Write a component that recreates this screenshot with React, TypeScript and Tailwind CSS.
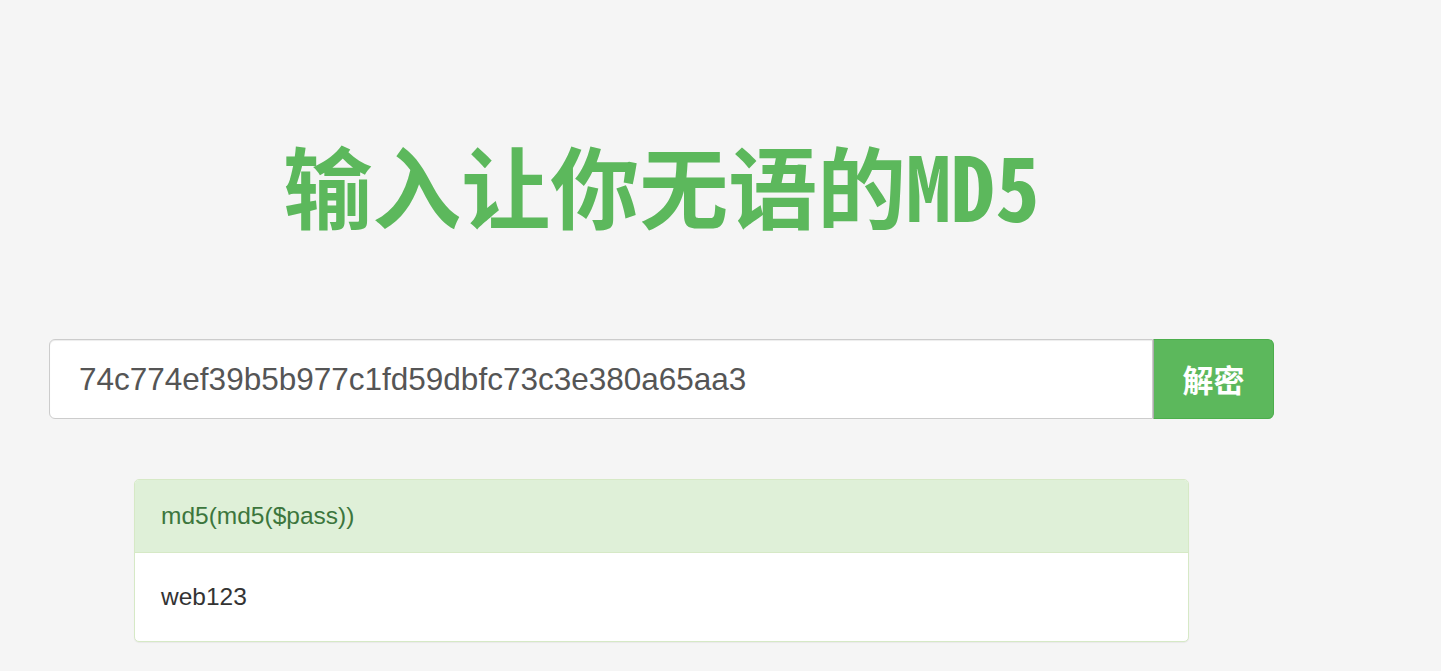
export default function App() {
  return (
    <div className="min-h-screen bg-[#f5f5f5] font-['Liberation_Sans','Noto_Sans_CJK_SC',sans-serif]">
      <div className="ml-[49px] w-[1225px] pt-[133px]">
        {/* Title */}
        <h1 className="flex h-[100px] items-center justify-center font-['Noto_Sans_Mono_CJK_SC','Noto_Sans_CJK_SC',sans-serif] text-[89px] font-bold leading-none text-[#5cb85c]">
          输入让你无语的MD5
        </h1>

        {/* Search bar */}
        <div className="mt-[106px] flex h-[80px]">
          <input
            className="h-full flex-1 rounded-l-[6px] border border-[#ccc] bg-white pl-[29px] text-[31.5px] text-[#555] shadow-[inset_0_1px_1px_rgba(0,0,0,0.075)] outline-none"
            defaultValue="74c774ef39b5b977c1fd59dbfc73c3e380a65aa3"
          />
          <button className="h-full w-[121px] rounded-r-[6px] border border-l-[#adadad] border-[#4cae4c] bg-[#5cb85c] font-['Noto_Sans_CJK_SC',sans-serif] text-[31px] font-bold text-white">
            解密
          </button>
        </div>

        {/* Result panel */}
        <div className="mx-auto mt-[60px] w-[1055px] overflow-hidden rounded-[5px] border border-[#d6e9c6] bg-white shadow-[0_1px_1px_rgba(0,0,0,0.05)]">
          <div className="flex h-[73px] items-center border-b border-[#d6e9c6] bg-[#dff0d8] px-[26px] text-[24.5px] text-[#3c763d]">
            md5(md5($pass))
          </div>
          <div className="flex h-[88px] items-center px-[26px] text-[24.5px] text-[#333]">
            web123
          </div>
        </div>
      </div>
    </div>
  );
}
